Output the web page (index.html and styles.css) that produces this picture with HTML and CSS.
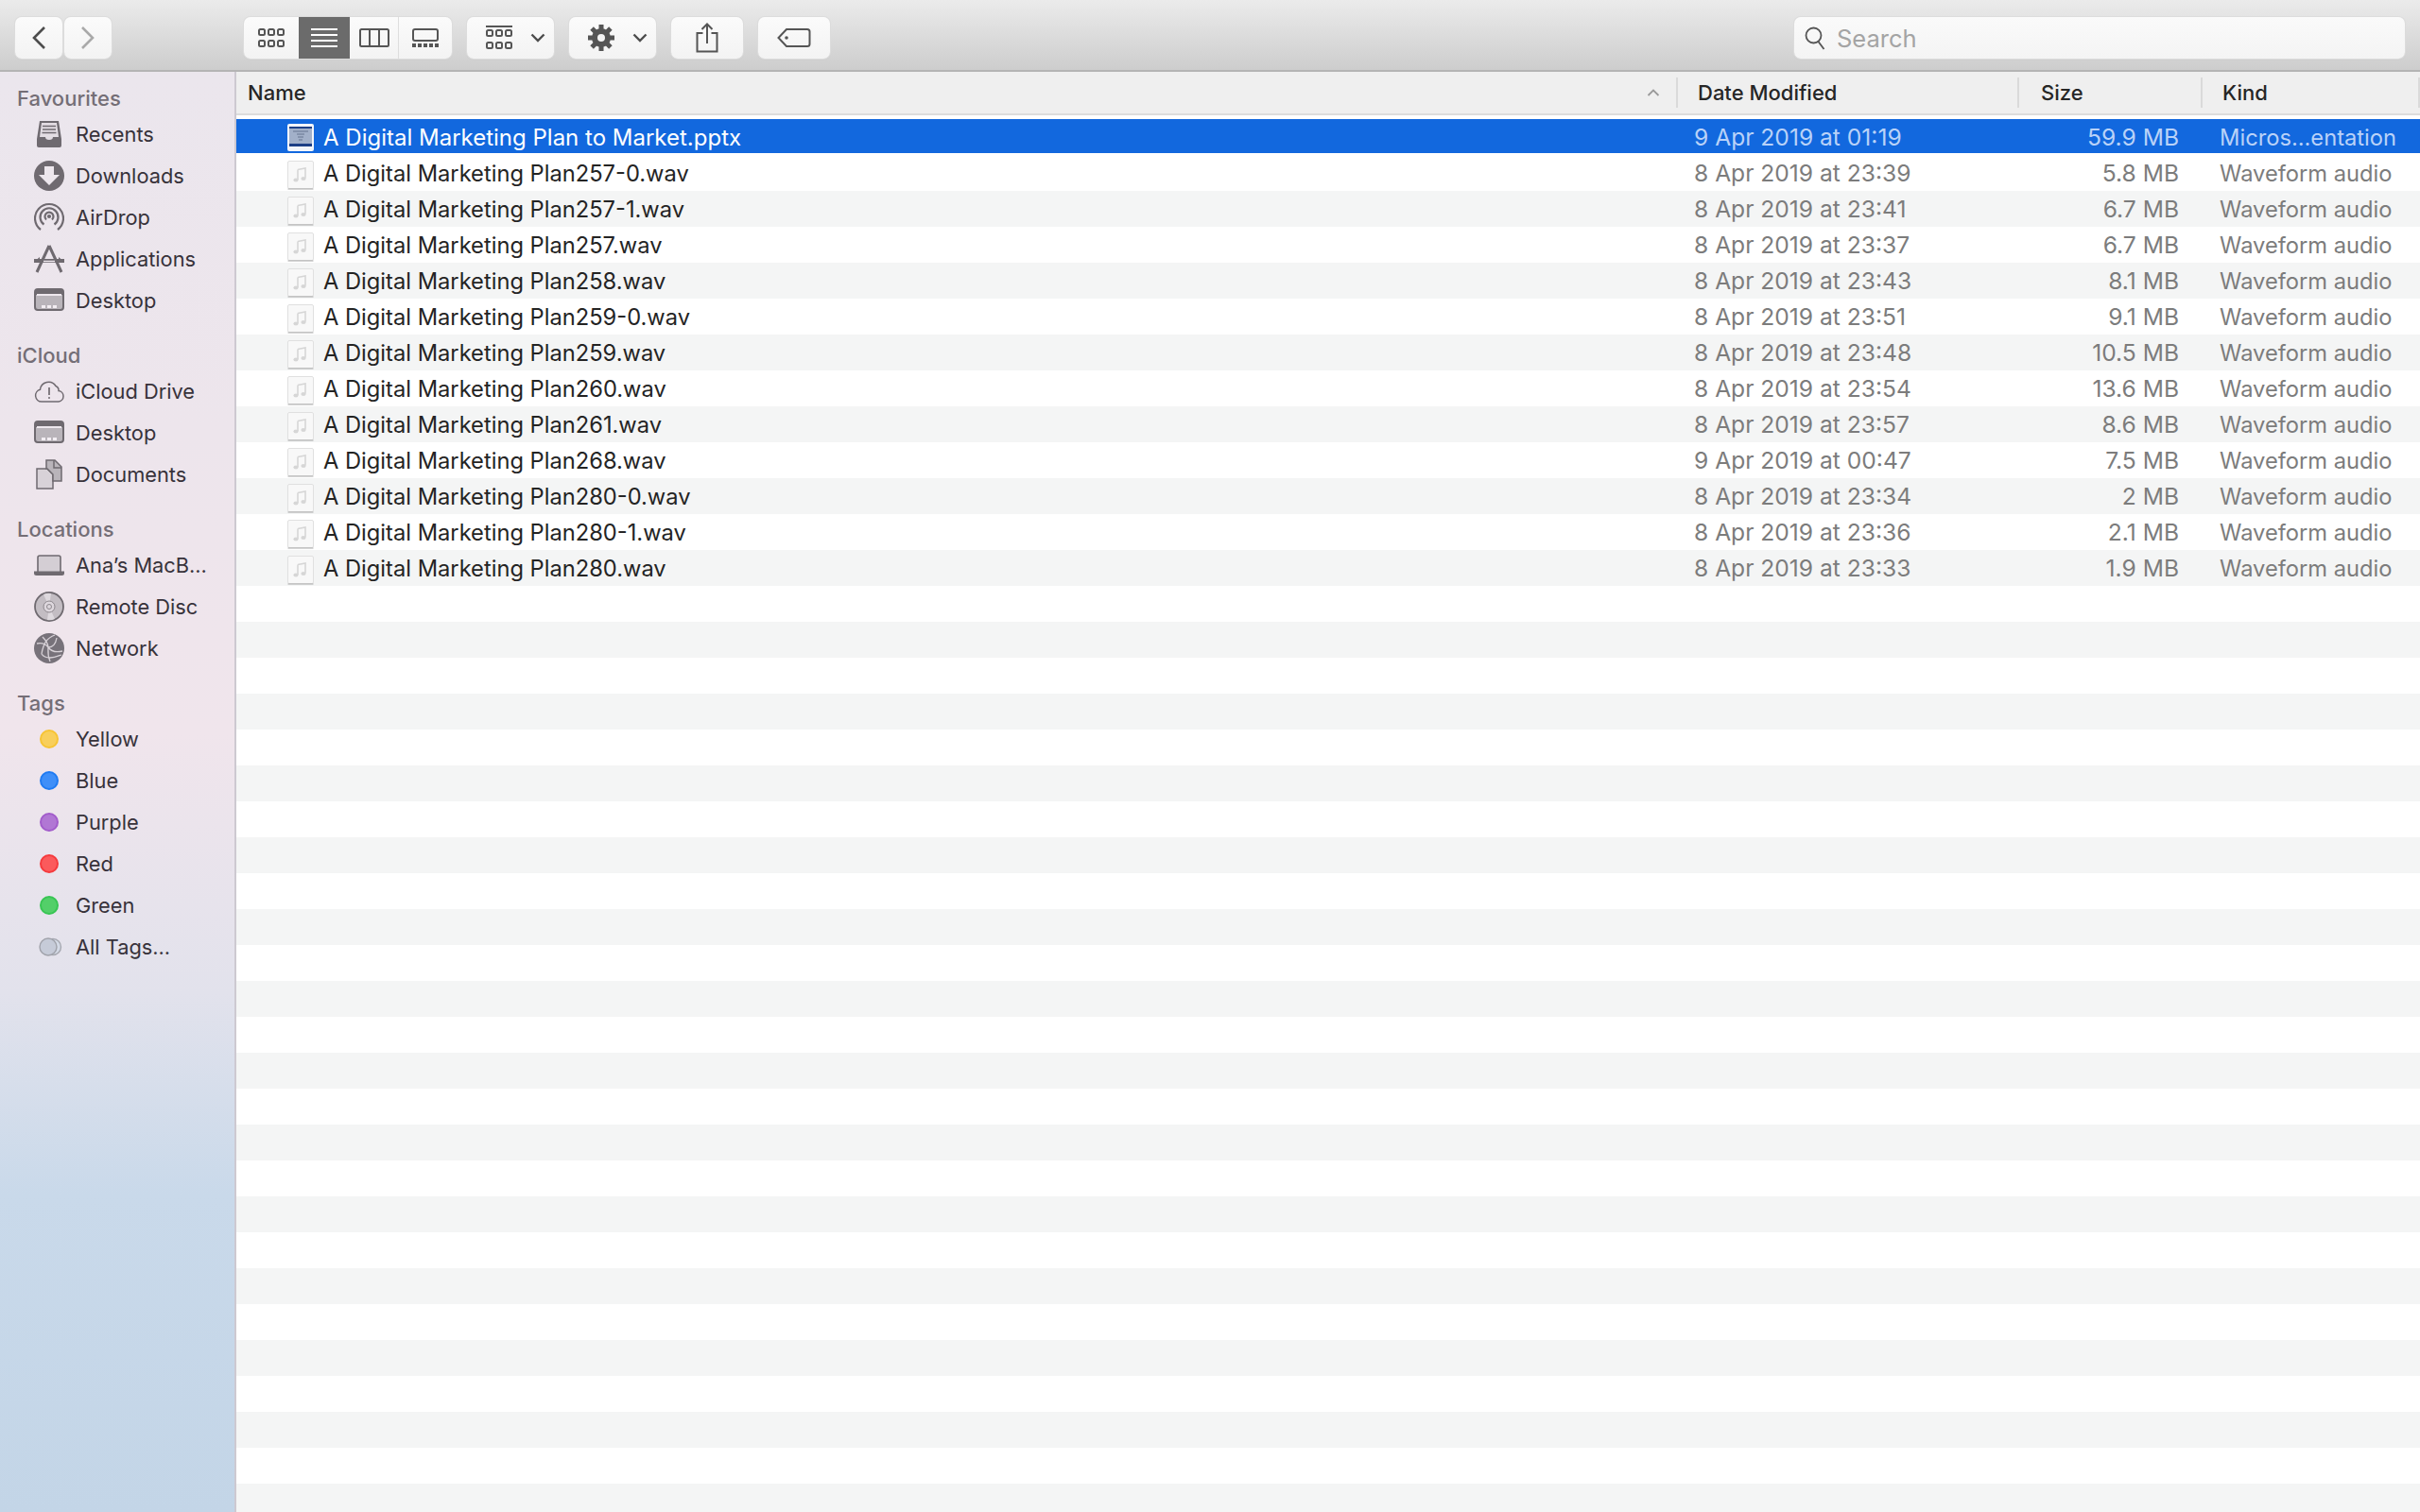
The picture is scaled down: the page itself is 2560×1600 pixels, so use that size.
FILE: index.html
```html
<!DOCTYPE html>
<html lang="en">
  <head>
    <meta charset="UTF-8" />
    <title>Finder</title>
    <link rel="stylesheet" href="styles.css">
  </head>
  <body>
    <!-- Shared icons -->
    <svg class="defs" width="0" height="0">
      <symbol id="i-desktop" viewBox="0 0 32 26">
        <rect x="1" y="1" width="30" height="22" rx="3" fill="#b9b4ba" stroke="#6f6a70" stroke-width="2"/>
        <path d="M1 4a3 3 0 0 1 3-3h24a3 3 0 0 1 3 3v3H1z" fill="#6f6a70"/>
        <rect x="3" y="6" width="26" height="2" fill="#eee8ee"/>
        <path d="M8 21v-3h4v3zM14 21v-3h4v3zM20 21v-3h4v3z" fill="#f2edf2"/>
      </symbol>
      <symbol id="i-note" viewBox="0 0 28 31">
        <rect x="0.5" y="0.5" width="27" height="29" rx="1.5" fill="#f8f8f8" stroke="#e0e0e0"/>
        <path d="M0.5 29.5h27v1h-27z" fill="#a8a8a8"/>
        <path d="M11 9.5l8-1.5v10.5M11 9.5V20" fill="none" stroke="#d6d6d6" stroke-width="1.6"/>
        <ellipse cx="9" cy="20.5" rx="2.6" ry="2" fill="#d6d6d6"/>
        <ellipse cx="17" cy="19" rx="2.6" ry="2" fill="#d6d6d6"/>
      </symbol>
    </svg>

    <header class="toolbar">
      <div class="nav-btns">
        <button class="btn nav-btn">
          <svg width="18" height="26" viewBox="0 0 18 26"><path d="M15 2L4 13l11 11" fill="none" stroke="#4d4d4d" stroke-width="2.6"/></svg>
        </button>
        <button class="btn nav-btn">
          <svg width="18" height="26" viewBox="0 0 18 26"><path d="M3 2l11 11L3 24" fill="none" stroke="#a9a9a9" stroke-width="2.6"/></svg>
        </button>
      </div>

      <div class="btn view-group">
        <div class="seg seg-icons">
          <svg width="30" height="22" viewBox="0 0 30 22" fill="none" stroke="#555" stroke-width="2"><rect x="2" y="2" width="6" height="6" rx="1.5"/><rect x="12" y="2" width="6" height="6" rx="1.5"/><rect x="22" y="2" width="6" height="6" rx="1.5"/><rect x="2" y="14" width="6" height="6" rx="1.5"/><rect x="12" y="14" width="6" height="6" rx="1.5"/><rect x="22" y="14" width="6" height="6" rx="1.5"/></svg>
        </div>
        <div class="seg seg-list">
          <svg width="30" height="22" viewBox="0 0 30 22" fill="#fff"><rect x="1" y="1" width="28" height="2"/><rect x="1" y="7" width="28" height="2"/><rect x="1" y="13" width="28" height="2"/><rect x="1" y="19" width="28" height="2"/></svg>
        </div>
        <div class="seg seg-cols">
          <svg width="32" height="22" viewBox="0 0 32 22" fill="none" stroke="#555" stroke-width="2"><rect x="1" y="2" width="30" height="18" rx="1.5"/><path d="M11 2v18M21 2v18"/></svg>
        </div>
        <div class="seg seg-gallery">
          <svg width="30" height="22" viewBox="0 0 30 22"><rect x="2" y="2" width="26" height="12" rx="2" fill="none" stroke="#555" stroke-width="2"/><path d="M1 17h4v4H1zM7 17h4v4H7zM13 17h4v4h-4zM19 17h4v4h-4zM25 17h4v4h-4z" fill="#555"/></svg>
        </div>
      </div>

      <button class="btn menu-btn group-btn">
        <svg width="30" height="28" viewBox="0 0 30 28" fill="none" stroke="#555" stroke-width="2"><path d="M1 2h28"/><rect x="2" y="6" width="6" height="6" rx="1.5"/><rect x="12" y="6" width="6" height="6" rx="1.5"/><rect x="22" y="6" width="6" height="6" rx="1.5"/><rect x="2" y="19" width="6" height="6" rx="1.5"/><rect x="12" y="19" width="6" height="6" rx="1.5"/><rect x="22" y="19" width="6" height="6" rx="1.5"/></svg>
        <svg class="chev" width="16" height="10" viewBox="0 0 16 10"><path d="M1.5 1.5L8 8l6.5-6.5" fill="none" stroke="#4d4d4d" stroke-width="2.4"/></svg>
      </button>

      <button class="btn menu-btn gear-btn">
        <svg width="30" height="30" viewBox="0 0 30 30">
          <g stroke="#555" stroke-width="5">
            <path d="M15 1v28M1 15h28M5.1 5.1l19.8 19.8M24.9 5.1L5.1 24.9"/>
          </g>
          <circle cx="15" cy="15" r="7.5" fill="none" stroke="#555" stroke-width="5"/>
          <circle cx="15" cy="15" r="4" fill="#f4f4f4"/>
        </svg>
        <svg class="chev" width="16" height="10" viewBox="0 0 16 10"><path d="M1.5 1.5L8 8l6.5-6.5" fill="none" stroke="#4d4d4d" stroke-width="2.4"/></svg>
      </button>

      <button class="btn share-btn">
        <svg width="24" height="32" viewBox="0 0 24 32" fill="none" stroke="#555" stroke-width="2"><path d="M7.5 11H1.5v19.5h21V11h-6M12 22V1.5M6.5 7L12 1.5 17.5 7"/></svg>
      </button>

      <button class="btn tag-btn">
        <svg width="36" height="22" viewBox="0 0 36 22"><path d="M10 2h22a2.5 2.5 0 0 1 2.5 2.5v13a2.5 2.5 0 0 1-2.5 2.5H10L1.5 11z" fill="none" stroke="#555" stroke-width="2"/><circle cx="10" cy="11" r="1.8" fill="#555"/></svg>
      </button>

      <div class="btn search">
        <svg width="24" height="26" viewBox="0 0 24 26" fill="none" stroke="#555" stroke-width="1.8"><circle cx="10.5" cy="10.5" r="8"/><path d="M15.5 17l6 8"/></svg>
        <span>Search</span>
      </div>
    </header>

    <div class="window">
      <aside class="sidebar">
        <section>
          <h4>Favourites</h4>
          <div class="side-item">
            <svg class="side-icon" width="32" height="30" viewBox="0 0 32 30"><path d="M6 1h20l3 19v7a2 2 0 0 1-2 2H5a2 2 0 0 1-2-2v-7z" fill="#6f6a70"/><path d="M8 3h16l2 15h-6a4 3 0 0 1-8 0H6z" fill="#e3dde3"/><path d="M9 6.5h14M9 10h14M8.5 13.5h15" stroke="#6f6a70" stroke-width="1.6"/></svg>
            Recents
          </div>
          <div class="side-item">
            <svg class="side-icon" width="32" height="32" viewBox="0 0 32 32"><circle cx="16" cy="16" r="16" fill="#6f6a70"/><path d="M11 6h10v9h6L16 26 5 15h6z" fill="#ede7ed"/></svg>
            Downloads
          </div>
          <div class="side-item">
            <svg class="side-icon" width="32" height="32" viewBox="0 0 32 32" fill="none" stroke="#6f6a70" stroke-width="2.2"><path d="M7 29A15 15 0 1 1 25 29"/><path d="M10.5 23.5a9.5 9.5 0 1 1 11 0"/><path d="M13 18.5a4.500 4.500 0 1 1 6 0"/><circle cx="16" cy="15" r="1" fill="#6f6a70"/></svg>
            AirDrop
          </div>
          <div class="side-item">
            <svg class="side-icon" width="32" height="30" viewBox="0 0 32 30"><path d="M0 15h32v4H0z" fill="#6f6a70"/><path d="M16 1L3 29M16 1l13 28" fill="none" stroke="#6f6a70" stroke-width="3"/><path d="M0 18l6-5v5zM32 18l-6-5v5z" fill="#6f6a70"/><path d="M10 17.5h12" stroke="#ede7ed" stroke-width="1.5"/></svg>
            Applications
          </div>
          <div class="side-item">
            <svg class="side-icon" width="32" height="26"><use href="#i-desktop"/></svg>
            Desktop
          </div>
        </section>

        <section>
          <h4>iCloud</h4>
          <div class="side-item">
            <svg class="side-icon" width="32" height="24" viewBox="0 0 32 24"><path d="M8 23a6.500 6.500 0 0 1-1.500-12.800A9 9 0 0 1 23 6.500a5 5 0 0 1 3 5A5.800 5.800 0 0 1 26 23z" fill="none" stroke="#6f6a70" stroke-width="1.5"/><path d="M16 8v8" stroke="#6f6a70" stroke-width="1.7"/><circle cx="16" cy="19" r="1" fill="#6f6a70"/></svg>
            iCloud Drive
          </div>
          <div class="side-item">
            <svg class="side-icon" width="32" height="26"><use href="#i-desktop"/></svg>
            Desktop
          </div>
          <div class="side-item">
            <svg class="side-icon" width="32" height="32" viewBox="0 0 32 32"><path d="M3 10h11l6 6v15H3z" fill="#d8d2d8" stroke="#6f6a70" stroke-width="1.5"/><path d="M13 1h9l7 7v15h-9v-7l-6-6h-1z" fill="#b9b4ba" stroke="#6f6a70" stroke-width="1.5"/><path d="M21 1v8h8" fill="none" stroke="#6f6a70" stroke-width="1.5"/></svg>
            Documents
          </div>
        </section>

        <section>
          <h4>Locations</h4>
          <div class="side-item">
            <svg class="side-icon" width="32" height="22" viewBox="0 0 32 22"><path d="M4 18V3a2 2 0 0 1 2-2h20a2 2 0 0 1 2 2v15" fill="#d4ced4" stroke="#6f6a70" stroke-width="1.6"/><path d="M0 17.5h32v2a2.5 2.5 0 0 1-2.5 2.5h-27A2.5 2.5 0 0 1 0 19.5z" fill="#6f6a70"/></svg>
            Ana’s MacB...
          </div>
          <div class="side-item">
            <svg class="side-icon" width="32" height="32" viewBox="0 0 32 32"><circle cx="16" cy="16" r="15" fill="#c3bdc3" stroke="#6f6a70" stroke-width="1.8"/><path d="M16 16L10 3a14 14 0 0 1 8-1zM16 16l6 13a14 14 0 0 1-8 1z" fill="#ded9de"/><circle cx="16" cy="16" r="6" fill="#ddd7dd" stroke="#8d878d"/><circle cx="16" cy="16" r="2.5" fill="none" stroke="#8d878d"/></svg>
            Remote Disc
          </div>
          <div class="side-item">
            <svg class="side-icon" width="32" height="32" viewBox="0 0 32 32"><circle cx="16" cy="16" r="16" fill="#77727a"/><g fill="none" stroke="#d8d2d8" stroke-width="1.3"><path d="M22 2c-8 3-12 8-14 20M3 11c5-1 9 0 12 4s7 6 15 4M9 4c4 4 6 8 6 11s-1 8 2 15M8 22c2 3 5 4 9 4 5 0 9-2 12-3M24 5c-1 6-3 10-9 10"/></g></svg>
            Network
          </div>
        </section>

        <section>
          <h4>Tags</h4>
          <div class="side-item"><span class="tag-dot tag-yellow"></span>Yellow</div>
          <div class="side-item"><span class="tag-dot tag-blue"></span>Blue</div>
          <div class="side-item"><span class="tag-dot tag-purple"></span>Purple</div>
          <div class="side-item"><span class="tag-dot tag-red"></span>Red</div>
          <div class="side-item"><span class="tag-dot tag-green"></span>Green</div>
          <div class="side-item">
            <svg class="side-icon" width="32" height="20" viewBox="0 0 32 20"><circle cx="20" cy="10" r="8.5" fill="#d4dae6" stroke="#a6a8b0" stroke-width="1.4"/><circle cx="15" cy="10" r="9" fill="#c6cbd8" stroke="#a0a2aa" stroke-width="1.4"/></svg>
            All Tags...
          </div>
        </section>
      </aside>

      <main class="files">
        <div class="col-head">
          <div class="head-cell head-name">
            Name
            <svg width="14" height="8" viewBox="0 0 14 8"><path d="M1.5 7L7 1.5 12.5 7" fill="none" stroke="#9a9a9a" stroke-width="1.8"/></svg>
          </div>
          <div class="head-cell">Date Modified</div>
          <div class="head-cell">Size</div>
          <div class="head-cell">Kind</div>
        </div>

        <div class="list">
          <div class="row selected">
            <div class="name">
              <svg class="file-icon" width="28" height="31" viewBox="0 0 28 31"><rect x="0" y="1" width="28" height="29" rx="2" fill="#f2f5fb"/><rect x="2" y="4" width="24" height="21" fill="#1d3f86"/><rect x="2" y="6" width="24" height="16" fill="#a2b0c9"/><path d="M6 9h16M10 12h8M11 15h6M12 18h4" stroke="#67748f"/></svg>
              A Digital Marketing Plan to Market.pptx
            </div>
            <div class="date">9 Apr 2019 at 01:19</div>
            <div class="size">59.9 MB</div>
            <div class="kind">Micros...entation</div>
          </div>
          <div class="row">
            <div class="name"><svg class="file-icon" width="28" height="31"><use href="#i-note"/></svg>A Digital Marketing Plan257-0.wav</div>
            <div class="date">8 Apr 2019 at 23:39</div>
            <div class="size">5.8 MB</div>
            <div class="kind">Waveform audio</div>
          </div>
          <div class="row">
            <div class="name"><svg class="file-icon" width="28" height="31"><use href="#i-note"/></svg>A Digital Marketing Plan257-1.wav</div>
            <div class="date">8 Apr 2019 at 23:41</div>
            <div class="size">6.7 MB</div>
            <div class="kind">Waveform audio</div>
          </div>
          <div class="row">
            <div class="name"><svg class="file-icon" width="28" height="31"><use href="#i-note"/></svg>A Digital Marketing Plan257.wav</div>
            <div class="date">8 Apr 2019 at 23:37</div>
            <div class="size">6.7 MB</div>
            <div class="kind">Waveform audio</div>
          </div>
          <div class="row">
            <div class="name"><svg class="file-icon" width="28" height="31"><use href="#i-note"/></svg>A Digital Marketing Plan258.wav</div>
            <div class="date">8 Apr 2019 at 23:43</div>
            <div class="size">8.1 MB</div>
            <div class="kind">Waveform audio</div>
          </div>
          <div class="row">
            <div class="name"><svg class="file-icon" width="28" height="31"><use href="#i-note"/></svg>A Digital Marketing Plan259-0.wav</div>
            <div class="date">8 Apr 2019 at 23:51</div>
            <div class="size">9.1 MB</div>
            <div class="kind">Waveform audio</div>
          </div>
          <div class="row">
            <div class="name"><svg class="file-icon" width="28" height="31"><use href="#i-note"/></svg>A Digital Marketing Plan259.wav</div>
            <div class="date">8 Apr 2019 at 23:48</div>
            <div class="size">10.5 MB</div>
            <div class="kind">Waveform audio</div>
          </div>
          <div class="row">
            <div class="name"><svg class="file-icon" width="28" height="31"><use href="#i-note"/></svg>A Digital Marketing Plan260.wav</div>
            <div class="date">8 Apr 2019 at 23:54</div>
            <div class="size">13.6 MB</div>
            <div class="kind">Waveform audio</div>
          </div>
          <div class="row">
            <div class="name"><svg class="file-icon" width="28" height="31"><use href="#i-note"/></svg>A Digital Marketing Plan261.wav</div>
            <div class="date">8 Apr 2019 at 23:57</div>
            <div class="size">8.6 MB</div>
            <div class="kind">Waveform audio</div>
          </div>
          <div class="row">
            <div class="name"><svg class="file-icon" width="28" height="31"><use href="#i-note"/></svg>A Digital Marketing Plan268.wav</div>
            <div class="date">9 Apr 2019 at 00:47</div>
            <div class="size">7.5 MB</div>
            <div class="kind">Waveform audio</div>
          </div>
          <div class="row">
            <div class="name"><svg class="file-icon" width="28" height="31"><use href="#i-note"/></svg>A Digital Marketing Plan280-0.wav</div>
            <div class="date">8 Apr 2019 at 23:34</div>
            <div class="size">2 MB</div>
            <div class="kind">Waveform audio</div>
          </div>
          <div class="row">
            <div class="name"><svg class="file-icon" width="28" height="31"><use href="#i-note"/></svg>A Digital Marketing Plan280-1.wav</div>
            <div class="date">8 Apr 2019 at 23:36</div>
            <div class="size">2.1 MB</div>
            <div class="kind">Waveform audio</div>
          </div>
          <div class="row">
            <div class="name"><svg class="file-icon" width="28" height="31"><use href="#i-note"/></svg>A Digital Marketing Plan280.wav</div>
            <div class="date">8 Apr 2019 at 23:33</div>
            <div class="size">1.9 MB</div>
            <div class="kind">Waveform audio</div>
          </div>
        </div>
      </main>
    </div>
  </body>
</html>
```

FILE: styles.css
```css
* {
  box-sizing: border-box;
}

body {
  margin: 0;
  height: 1600px;
  overflow: hidden;
  background: #fff;
  font-family: Inter, "Noto Sans", sans-serif;
  font-size: 24px;
  color: #242424;
  display: flex;
  flex-direction: column;
}

.defs {
  position: absolute;
}

/* Toolbar */

.toolbar {
  height: 76px;
  flex: none;
  display: flex;
  align-items: center;
  padding: 6px 16px 0;
  background: linear-gradient(#ebebeb, #cdcdcd);
  border-bottom: 2px solid #b4b4b4;
}

.btn {
  height: 44px;
  padding: 0;
  display: flex;
  align-items: center;
  justify-content: center;
  background: linear-gradient(#fbfbfb, #f3f3f3);
  border: none;
  border-radius: 7px;
  box-shadow: 0 0 0 1px #dcdcdc, 0 1px 1px #bdbdbd;
}

.nav-btns {
  display: flex;
  gap: 2px;
}

.nav-btn {
  width: 50px;
}

.view-group {
  margin-left: 140px;
  width: 220px;
  justify-content: flex-start;
  overflow: hidden;
}

.seg {
  height: 44px;
  display: flex;
  align-items: center;
  justify-content: center;
}

.seg-icons {
  width: 58px;
}

.seg-list {
  width: 54px;
  background: #6b6b6b;
}

.seg-cols {
  width: 52px;
  border-right: 1px solid #dedede;
}

.seg-gallery {
  width: 56px;
}

.menu-btn {
  width: 92px;
  justify-content: flex-start;
  padding-left: 19px;
  gap: 18px;
}

.group-btn {
  margin-left: 16px;
}

.gear-btn {
  margin-left: 16px;
}

.share-btn {
  width: 76px;
  margin-left: 16px;
}

.tag-btn {
  width: 76px;
  margin-left: 16px;
}

.search {
  width: 646px;
  margin-left: auto;
  justify-content: flex-start;
  padding-left: 10px;
  gap: 11px;
  background: linear-gradient(#fafafa, #f4f4f4);
  color: #a4a4a4;
  font-size: 25.5px;
}

/* Sidebar */

.window {
  flex: 1;
  display: flex;
  min-height: 0;
}

.sidebar {
  width: 250px;
  flex: none;
  padding-top: 12px;
  background: linear-gradient(#ebe6ed 0%, #ede5ec 25%, #f0e5ec 46%, #e2e2ec 64%, #c9d9ea 78%, #c3d5e7 100%);
  border-right: 2px solid #cdc9d1;
  color: #37323a;
}

.sidebar section {
  margin-bottom: 20px;
}

.sidebar h4 {
  margin: 0;
  height: 32px;
  line-height: 32px;
  padding-left: 18px;
  font-size: 22px;
  font-weight: 500;
  color: #746e76;
}

.side-item {
  height: 44px;
  display: flex;
  align-items: center;
  padding-left: 36px;
  font-size: 21.8px;
  white-space: nowrap;
}

.side-icon {
  width: 32px;
  flex: none;
  margin-right: 12px;
}

.tag-dot {
  width: 20px;
  height: 20px;
  margin: 0 18px 0 6px;
  flex: none;
  border-radius: 50%;
  border: 2px solid;
}

.tag-yellow {
  background: #f8cf5c;
  border-color: #f6c435;
}

.tag-blue {
  background: #3f8ff8;
  border-color: #1f7bf2;
}

.tag-purple {
  background: #b177d4;
  border-color: #a25ccb;
}

.tag-red {
  background: #fb5a5c;
  border-color: #f53a3d;
}

.tag-green {
  background: #53cf69;
  border-color: #38c553;
}

/* File list */

.files {
  flex: 1;
  min-width: 0;
}

.col-head,
.row {
  display: grid;
  grid-template-columns: 1525px 361px 194px 1fr;
}

.col-head {
  height: 46px;
  padding-top: 1px;
  background: #efefef;
  border-bottom: 2px solid #dcdcdc;
  font-weight: 500;
  font-size: 22px;
  color: #262626;
}

.head-cell {
  margin: 5px 0 6px;
  padding-left: 23px;
  display: flex;
  align-items: center;
  border-right: 2px solid #dadada;
}

.head-cell:nth-child(2) {
  padding-left: 21px;
}

.head-cell:last-child {
  padding-left: 21px;
}

.head-name {
  padding: 0 17px 0 12px;
  justify-content: space-between;
}

.list {
  margin-top: 4px;
  height: 1474px;
  background: repeating-linear-gradient(#f4f5f5 0, #f4f5f5 38px, #fff 38px, #fff 76px);
}

.row {
  height: 38px;
  align-items: center;
  color: #7c7c7c;
}

.row.selected {
  background: linear-gradient(#1268de 36px, #fff 36px);
  color: #b9d2f8;
}

.name {
  height: 38px;
  display: flex;
  align-items: center;
  padding-left: 54px;
  font-size: 23.7px;
  color: #242424;
}

.selected .name {
  font-size: 24px;
  color: #fff;
}

.file-icon {
  margin: 5px 10px 0 0;
  flex: none;
}

.selected .file-icon {
  margin-top: 1px;
}

.date {
  padding-left: 17px;
  font-size: 24.6px;
}

.size {
  text-align: right;
  padding-right: 25px;
  font-size: 24.6px;
}

.kind {
  padding-left: 18px;
  font-size: 23.7px;
  white-space: nowrap;
}
```
